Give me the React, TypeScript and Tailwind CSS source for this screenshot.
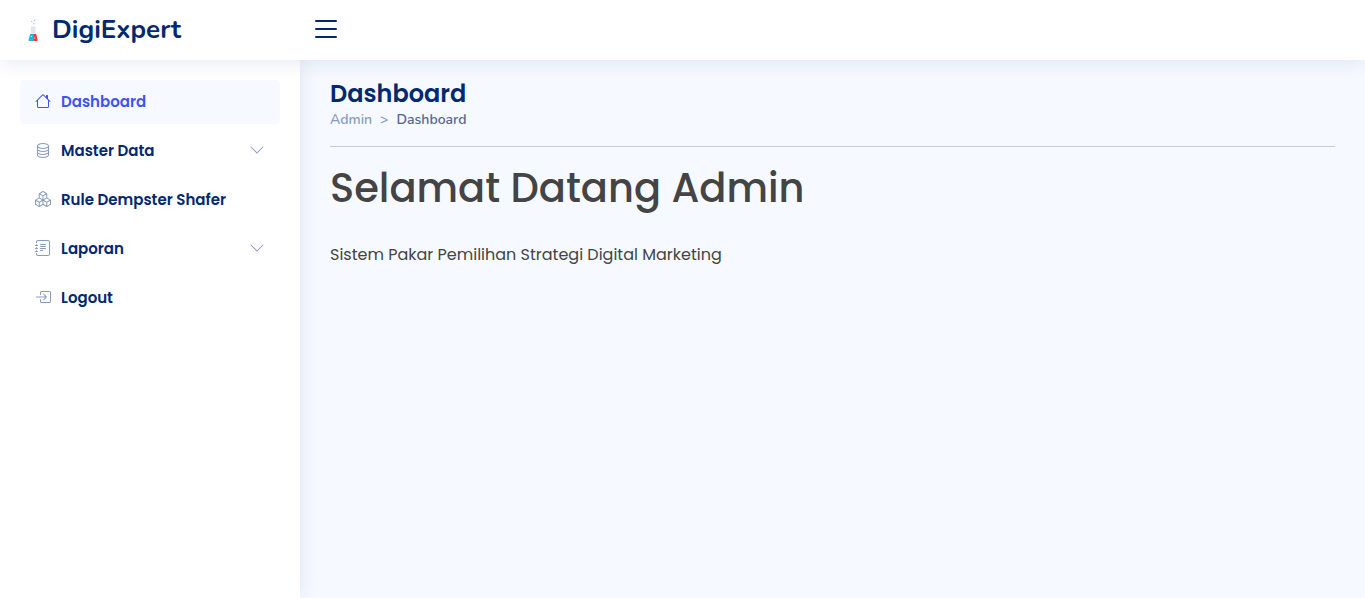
import type { ReactNode } from "react";
import {
  BsBoxArrowInRight,
  BsBoxes,
  BsChevronDown,
  BsDatabase,
  BsHouse,
  BsJournalText,
  BsList,
} from "react-icons/bs";

function Flask() {
  return (
    <svg viewBox="0 0 20 26" className="h-[26px] w-5" aria-hidden="true">
      <g fill="#7dd8ee">
        <circle cx="11.500" cy="4.500" r="0.800" />
        <circle cx="8.700" cy="5.400" r="0.700" />
        <circle cx="10.800" cy="7.700" r="0.700" />
      </g>
      <path d="M7.500 10.500h5.500v1h-.500v4.500l2 8.500H6L8 16v-4.500h-.500z" fill="#e3e6e9" />
      <path d="M7.200 18H10.200v7H6.300a.700.700 0 0 1-.700-1z" fill="#22b4de" />
      <path d="M10.200 18H13.200l1.400 6a.800.800 0 0 1-.800 1H10.200z" fill="#f03a42" />
      <circle cx="8.600" cy="20.500" r="0.600" fill="#fff" />
      <circle cx="11.700" cy="22" r="0.600" fill="#fff" />
    </svg>
  );
}

type ItemProps = {
  icon: ReactNode;
  label: string;
  active?: boolean;
  expandable?: boolean;
};

function NavItem({ icon, label, active, expandable }: ItemProps) {
  return (
    <li>
      <a
        href="#"
        className={
          active
            ? "flex h-11 items-center gap-2.5 rounded bg-[#f6f9ff] px-[15px] text-[15px] font-semibold text-[#4154f1]"
            : "flex h-11 items-center gap-2.5 rounded px-[15px] text-[15px] font-semibold text-[#012970]"
        }
      >
        <span className={active ? "pb-0.5 text-base text-[#4154f1]" : "pb-0.5 text-base text-[#899bbd]"}>
          {icon}
        </span>
        <span className="grow">{label}</span>
        {expandable && (
          <span className="pb-0.5 text-base text-[#899bbd]">
            <BsChevronDown />
          </span>
        )}
      </a>
    </li>
  );
}

export default function App() {
  return (
    <div className="flex min-h-screen flex-col bg-[#f6f9ff] font-['Poppins','Inter',sans-serif] text-[#444444]">
      <header className="z-20 flex h-[60px] items-center bg-white pb-0.5 pl-5 shadow-[0_2px_20px_rgba(1,41,112,0.1)]">
        <a
          href="#"
          className="flex w-[280px] items-center gap-[9px] pl-[3px] font-['Nunito','Noto_Sans',sans-serif] text-[26px] font-bold text-[#012970]"
        >
          <Flask />
          <span>DigiExpert</span>
        </a>
        <button type="button" aria-label="Toggle sidebar" className="px-[10px] text-[#012970]">
          <BsList className="size-8" />
        </button>
      </header>

      <div className="flex grow">
        <aside className="z-10 w-[300px] shrink-0 bg-white p-5 shadow-[0_0_20px_rgba(1,41,112,0.1)]">
          <nav aria-label="Main">
            <ul className="flex flex-col gap-[5px]">
              <NavItem icon={<BsHouse />} label="Dashboard" active />
              <NavItem icon={<BsDatabase />} label="Master Data" expandable />
              <NavItem icon={<BsBoxes />} label="Rule Dempster Shafer" />
              <NavItem icon={<BsJournalText />} label="Laporan" expandable />
              <NavItem icon={<BsBoxArrowInRight />} label="Logout" />
            </ul>
          </nav>
        </aside>

        <main className="grow px-[30px] py-5">
          <h1 className="text-2xl leading-7 font-semibold text-[#012970]">Dashboard</h1>
          <nav aria-label="Breadcrumb">
            <ol className="flex gap-2 font-['Nunito','Noto_Sans',sans-serif] text-sm leading-6 font-semibold text-[#899bbd]">
              <li>
                <a href="#">Admin</a>
              </li>
              <li aria-hidden="true">&gt;</li>
              <li className="text-[#51678f]">Dashboard</li>
            </ol>
          </nav>
          <hr className="mt-3.5 border-[#c9ccd2]" />
          <h2 className="mt-4 text-[40px] leading-[50px] font-medium">Selamat Datang Admin</h2>
          <p className="mt-[30px] text-base leading-6">Sistem Pakar Pemilihan Strategi Digital Marketing</p>
        </main>
      </div>
    </div>
  );
}
